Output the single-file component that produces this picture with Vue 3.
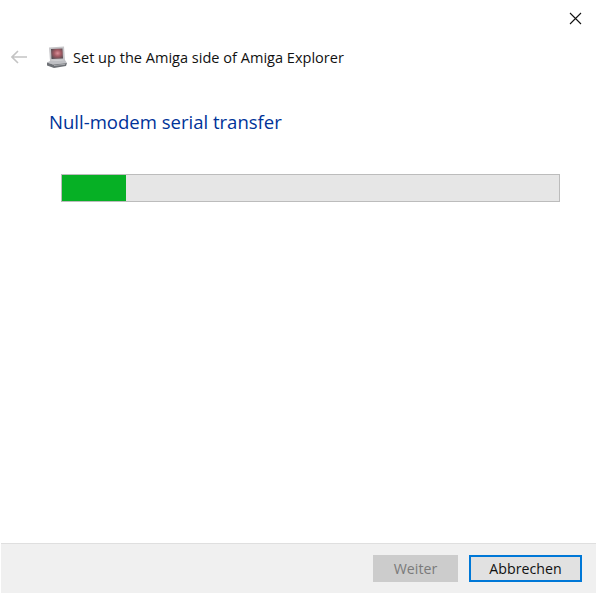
<template>
  <div class="wizard">
    <div class="close-row">
      <button class="close-btn" aria-label="Close">
        <svg width="13" height="13" viewBox="0 0 13 13">
          <path d="M1 1 L12 12 M12 1 L1 12" stroke="#111" stroke-width="1.1" fill="none" />
        </svg>
      </button>
    </div>
    <div class="title-row">
      <svg class="back" width="16" height="14" viewBox="0 0 16 14">
        <path d="M1 7 H16 M7 1 L1 7 L7 13" stroke="#c4c4c4" stroke-width="1.6" fill="none" />
      </svg>
      <svg class="app-icon" width="22" height="22" viewBox="0 0 22 22">
        <defs>
          <radialGradient id="screen" cx="0.55" cy="0.45" r="0.65">
            <stop offset="0" stop-color="#d98f98" />
            <stop offset="0.45" stop-color="#a35a63" />
            <stop offset="1" stop-color="#4f4a50" />
          </radialGradient>
        </defs>
        <path d="M3 1.5 L18 0.5 L19 14 L4 15 Z" fill="#c6c5c8" />
        <path d="M5 3 L16.5 2.5 L17 12.5 L5.5 13 Z" fill="url(#screen)" />
        <path d="M4 15 L19 14 L21 17 L7 18.5 L1 16.5 Z" fill="#bfc0c4" />
        <path d="M1 16.5 L7 18.5 L21 17 L20 20 L8 22 L1 19.5 Z" fill="#6e7176" />
        <path d="M8 19.5 L19 18.3" stroke="#a9abaf" stroke-width="1" />
      </svg>
      <span class="title">Set up the Amiga side of Amiga Explorer</span>
    </div>
    <div class="content">
      <h1 class="heading">Null-modem serial transfer</h1>
      <div class="progress">
        <div class="progress-fill" :style="{ width: progress + '%' }"></div>
      </div>
    </div>
    <div class="footer">
      <button class="btn btn-disabled" disabled>Weiter</button>
      <button class="btn btn-default">Abbrechen</button>
    </div>
  </div>
</template>

<script setup>
const progress = 12.9
</script>

<style>
html, body {
  margin: 0;
  background: #fff;
}
</style>

<style scoped>
.wizard {
  width: 597px;
  height: 595px;
  display: flex;
  flex-direction: column;
  box-sizing: border-box;
  padding: 0 1px 2px 1px;
  background: #fff;
  font-family: "Open Sans", "Noto Sans", sans-serif;
  color: #111;
  overflow: hidden;
}

.close-row {
  height: 38px;
  display: flex;
  justify-content: flex-end;
  align-items: flex-end;
  padding-right: 14px;
}

.close-btn {
  border: none;
  background: none;
  padding: 0;
  margin-bottom: 13px;
  height: 13px;
  display: block;
}

.title-row {
  height: 38px;
  display: flex;
  align-items: center;
  padding-left: 10px;
}

.back {
  margin-right: 19px;
}

.app-icon {
  margin-right: 5px;
}

.title {
  font-size: 14.55px;
  line-height: 20px;
}

.content {
  flex: 1;
  padding: 0 36px 0 48px;
}

.heading {
  margin: 0;
  padding-top: 32px;
  font-size: 18.55px;
  line-height: 28px;
  font-weight: 400;
  color: #003399;
}

.progress {
  margin: 38px 0 0 12px;
  height: 28px;
  box-sizing: border-box;
  background: #e6e6e6;
  border: 1px solid #bcbcbc;
}

.progress-fill {
  height: 100%;
  background: #06b025;
}

.footer {
  height: 50px;
  box-sizing: border-box;
  border-top: 1px solid #dfdfdf;
  background: #f0f0f0;
  display: flex;
  justify-content: flex-end;
  align-items: center;
  gap: 11px;
  padding-right: 14px;
}

.btn {
  width: 85px;
  height: 27px;
  box-sizing: border-box;
  font-family: inherit;
  font-size: 14.2px;
  padding: 0;
}

.btn-disabled {
  background: #cccccc;
  border: 1px solid #cccccc;
  color: #7a7a7a;
}

.btn-default {
  width: 113px;
  background: #e1e1e1;
  border: 2px solid #0078d7;
  color: #111;
}
</style>
